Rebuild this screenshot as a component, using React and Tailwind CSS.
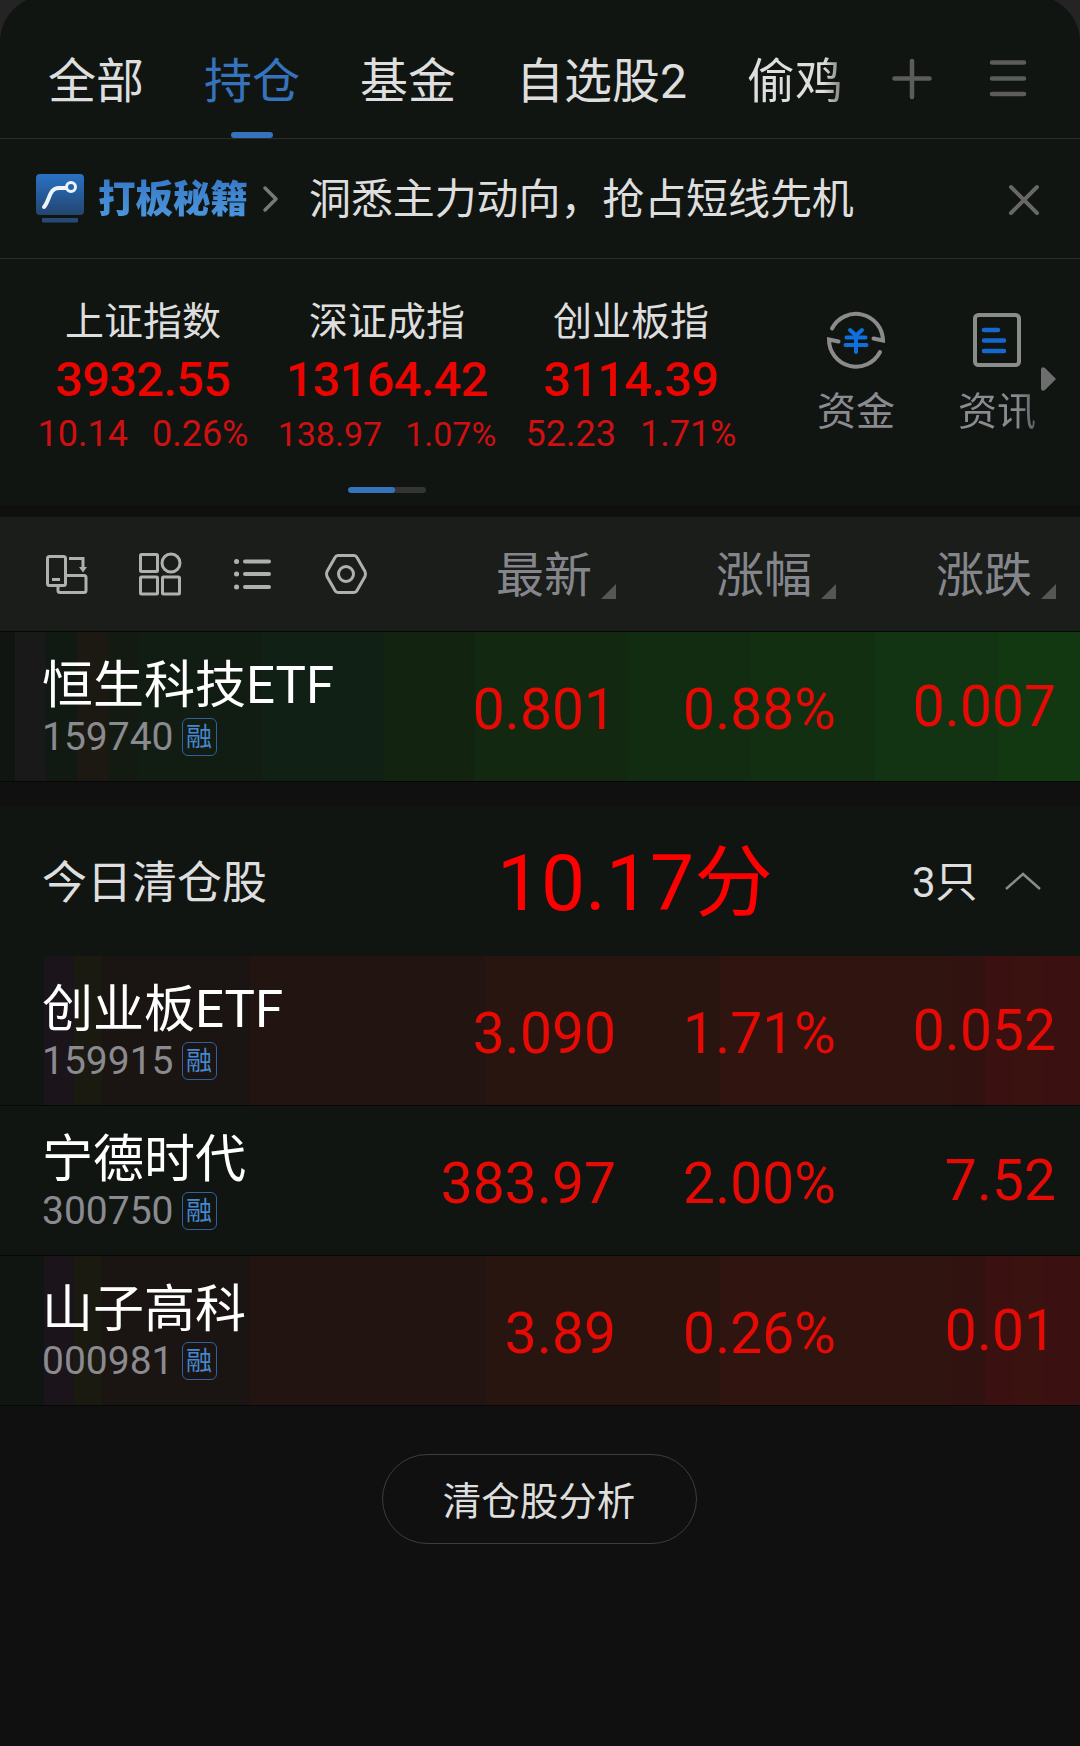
import React from 'react';
import clsx from 'clsx';

const tabs = ['全部', '持仓', '基金', '自选股2'];

const indices = [
  { name: '上证指数', value: '3932.55', change: '10.14', percent: '0.26%', small: false },
  { name: '深证成指', value: '13164.42', change: '138.97', percent: '1.07%', small: true },
  { name: '创业板指', value: '3114.39', change: '52.23', percent: '1.71%', small: false },
];

const columns = ['最新', '涨幅', '涨跌'];

const holding = { name: '恒生科技ETF', code: '159740', price: '0.801', percent: '0.88%', change: '0.007', tone: 'green' };

const clearedStocks = [
  { name: '创业板ETF', code: '159915', price: '3.090', percent: '1.71%', change: '0.052', tone: 'red' },
  { name: '宁德时代', code: '300750', price: '383.97', percent: '2.00%', change: '7.52', tone: 'plain' },
  { name: '山子高科', code: '000981', price: '3.89', percent: '0.26%', change: '0.01', tone: 'red' },
];

// Stepped colour bands behind a row
const bands = {
  green: [
    ['w-[15px]', 'bg-[#111512]'],
    ['w-[31px]', 'bg-[#1a191a]'],
    ['w-[31px]', 'bg-[#111a12]'],
    ['w-[31px]', 'bg-[#1b1911]'],
    ['w-[30px]', 'bg-[#121a11]'],
    ['w-[123px]', 'bg-[#111c12]'],
    ['w-[123px]', 'bg-[#112014]'],
    ['w-[91px]', 'bg-[#122310]'],
    ['w-[153px]', 'bg-[#122811]'],
    ['w-[123px]', 'bg-[#122c12]'],
    ['w-[124px]', 'bg-[#132f12]'],
    ['w-[123px]', 'bg-[#123412]'],
    ['flex-1', 'bg-[#123812]'],
  ],
  red: [
    ['w-[44px]', 'bg-[#111512]'],
    ['w-[30px]', 'bg-[#1b141a]'],
    ['w-[28px]', 'bg-[#1a1a11]'],
    ['w-[148px]', 'bg-[#1a1512]'],
    ['w-[235px]', 'bg-[#221411]'],
    ['w-[235px]', 'bg-[#291510]'],
    ['w-[232px]', 'bg-[#301410]'],
    ['w-[33px]', 'bg-[#301211]'],
    ['w-[29px]', 'bg-[#3a1011]'],
    ['w-[28px]', 'bg-[#3a1311]'],
    ['flex-1', 'bg-[#3a1011]'],
  ],
  plain: [],
};

const SortMark = () => (
  <svg className="w-[15px] h-[15px] mb-[3px]" viewBox="0 0 15 15">
    <path d="M15 0v15H0z" fill="#555755" />
  </svg>
);

const StockRow = ({ stock }) => (
  <div className="relative h-[150px] border-b border-[#060806] bg-[#111512]">
    <div className="absolute inset-0 flex">
      {bands[stock.tone].map(([width, color], i) => (
        <span key={i} className={clsx('h-full', width, color)} />
      ))}
    </div>
    <div className="relative flex h-full pr-6">
      <div className="w-[376px] pl-[42px] pt-6">
        <div className="h-[60px] text-[51px] leading-[60px] text-white whitespace-nowrap">{stock.name}</div>
        <div className="mt-px flex items-center gap-2">
          <span className="text-[39px] leading-[40px] text-[#8a8a90]">{stock.code}</span>
          <span className="flex h-[38px] w-[35px] items-center justify-center rounded-[6px] border border-[#33609c] text-[26px] leading-none text-[#4687cf]">
            融
          </span>
        </div>
      </div>
      <div className="flex flex-1 text-right text-[57px] leading-[64px] text-[#e60a05]">
        <span className="w-60 pt-[46px]">{stock.price}</span>
        <span className="w-[220px] pt-[46px]">{stock.percent}</span>
        <span className="w-[220px] pt-[43px]">{stock.change}</span>
      </div>
    </div>
  </div>
);

const App = () => {
  return (
    <div className="w-[1080px] h-[1746px] overflow-hidden bg-[#242424] font-[Roboto,'Noto_Sans_CJK_SC',sans-serif]">
      <div className="-mt-[5px] h-[1751px] overflow-hidden rounded-t-[48px] bg-[#101010] pt-[5px]">
        {/* Tabs */}
        <div className="flex h-[139px] border-b border-[#2a2d2a] bg-[#111512] pl-12">
          <div className="flex gap-[60px] text-[48px] leading-[64px] text-[#dedede] whitespace-nowrap">
            {tabs.map((tab) => (
              <div
                key={tab}
                className={clsx('flex h-[138px] flex-col items-center justify-between pt-[50px]', tab === '持仓' && 'text-[#3673bd]')}
              >
                <span>{tab}</span>
                {tab === '持仓' && <span className="h-[6px] w-[42px] rounded-[3px] bg-[#3673bd]" />}
              </div>
            ))}
            <div className="pt-[50px]">
              <span className="bg-linear-to-r from-[#dedede] from-80% to-[#777] bg-clip-text text-transparent">偷鸡</span>
            </div>
          </div>
          <svg className="ml-[49px] mt-[58px] h-[42px] w-[40px]" viewBox="0 0 40 42" fill="none" stroke="#5b5c5b" strokeWidth="4.5" strokeLinecap="round">
            <path d="M20 3v36M2.500 20.500h35" />
          </svg>
          <svg className="ml-[56px] mt-[58px] h-[42px] w-[40px]" viewBox="0 0 40 42" fill="none" stroke="#5b5c5b" strokeWidth="4.5" strokeLinecap="round">
            <path d="M4 4.500h32M4 20.500h32M4 36h32" />
          </svg>
        </div>

        {/* Promo strip */}
        <div className="flex h-[120px] items-center border-b border-[#2a2d2a] bg-[#111512] pl-9">
          <svg className="h-[50px] w-12" viewBox="0 0 48 50" fill="none">
            <defs>
              <linearGradient id="promo" x1="0" y1="0" x2="0" y2="1">
                <stop offset="0" stopColor="#2a72c4" />
                <stop offset="1" stopColor="#23456f" />
              </linearGradient>
            </defs>
            <rect width="48" height="41" rx="4" fill="url(#promo)" />
            <rect x="6" y="44" width="36" height="4.5" rx="1" fill="#264a75" />
            <path d="M8 33c6-7 5-19 15-19h7" stroke="#eef4fc" strokeWidth="4" strokeLinecap="round" />
            <circle cx="35" cy="13" r="4.5" stroke="#eef4fc" strokeWidth="3" />
          </svg>
          <span className="ml-[14px] bg-linear-to-b from-[#3577c6] to-[#4f9ade] bg-clip-text text-[37.5px] font-black leading-[48px] text-transparent">
            打板秘籍
          </span>
          <svg className="ml-[14px] h-[30px] w-[18px]" viewBox="0 0 18 30" fill="none" stroke="#777877" strokeWidth="3.5" strokeLinecap="round" strokeLinejoin="round">
            <path d="M3 4l11 11L3 26" />
          </svg>
          <span className="ml-[29px] pt-[3px] text-[42px] leading-[60px] -tracking-[0.1px] text-[#dedede] whitespace-nowrap">
            洞悉主力动向，抢占短线先机
          </span>
          <svg className="ml-auto mr-10 mt-[2px] h-8 w-8" viewBox="0 0 32 32" fill="none" stroke="#666766" strokeWidth="4" strokeLinecap="round">
            <path d="M3 3l26 26M29 3L3 29" />
          </svg>
        </div>

        {/* Market indices */}
        <div className="relative h-[246px] bg-[#111512]">
          <div className="flex pl-[21px] pt-[33px]">
            {indices.map((item) => (
              <div key={item.name} className="flex w-[244px] flex-col items-center pt-[2px] whitespace-nowrap">
                <span className="text-[39px] leading-[56px] text-[#dedede]">{item.name}</span>
                <span className="text-[49px] font-medium leading-[60px] -tracking-[0.8px] text-[#ea0500]">{item.value}</span>
                <span
                  className={clsx(
                    'flex h-[48px] items-center text-[#cf1010]',
                    item.small ? 'gap-[23px] pt-px text-[34px]' : 'gap-6 text-[36px]'
                  )}
                >
                  <span>{item.change}</span>
                  <span>{item.percent}</span>
                </span>
              </div>
            ))}
            <div className="ml-[32px] flex w-[142px] flex-col items-center pt-[15px]">
              <svg className="h-[64px] w-[64px]" viewBox="0 0 64 64" fill="none" strokeLinecap="round">
                <g stroke="#8b8b8b" strokeWidth="4">
                  <path d="M8 21.500A27 27 0 0 1 59 33.500L49.500 31.500" />
                  <path d="M56 45A27 27 0 0 1 5 32.500L14.500 34.500" />
                </g>
                <path d="M26 23l6 5.500 6-5.500M22.500 30.500h19M21.500 38h21M32 29v16" stroke="#0f6fdc" strokeWidth="4" />
              </svg>
              <span className="mt-[13px] text-[39px] leading-[56px] text-[#8a8a90]">资金</span>
            </div>
            <div className="flex w-[140px] flex-col items-center pt-[15px]">
              <svg className="h-[64px] w-[64px]" viewBox="0 0 64 64" fill="none" strokeLinecap="round">
                <rect x="10" y="8" width="44" height="50" rx="3.500" stroke="#8b8b8b" strokeWidth="4" />
                <path d="M19 23h14M19 33.500h20M19 44h20" stroke="#1668cf" strokeWidth="4.500" />
              </svg>
              <span className="mt-[13px] bg-linear-to-r from-[#8a8a90] from-75% to-[#5e5f62] bg-clip-text text-[39px] leading-[56px] text-transparent">
                资讯
              </span>
            </div>
          </div>
          <svg className="absolute right-6 top-[107px] h-[26px] w-[15px]" viewBox="0 0 15 26">
            <path d="M0 3Q1 0 4 2L15 13 4 24Q1 26 0 23z" fill="#6c6d6c" />
          </svg>
          <div className="absolute left-[348px] top-[228px] h-[6px] w-[78px] overflow-hidden rounded-[3px] bg-[#333433]">
            <div className="h-full w-[47px] rounded-[3px] bg-[#3673bd]" />
          </div>
        </div>

        {/* List toolbar */}
        <div className="mt-3 flex h-[115px] border-b border-[#060806] bg-[#1a1d1a] pl-[45px] pt-[35px]">
          <svg className="h-[44px] w-[44px]" viewBox="0 0 44 44" fill="none" stroke="#b0b0b0" strokeWidth="3">
            <rect x="2.500" y="4.500" width="18" height="29" rx="2" />
            <path d="M7 27.500h8M24 6.500h14v9" />
            <path d="M34 15h8l-4 5.500z" fill="#b0b0b0" stroke="none" />
            <path d="M21 23.500h18a2 2 0 0 1 2 2v13a2 2 0 0 1-2 2H15a2 2 0 0 1-2-2v-5" />
          </svg>
          <svg className="ml-[49px] h-[44px] w-[44px]" viewBox="0 0 44 44" fill="none" stroke="#b0b0b0" strokeWidth="3">
            <rect x="2.500" y="2.500" width="17" height="17" rx="1" />
            <circle cx="33" cy="11" r="9" />
            <rect x="2.500" y="25" width="17" height="17" rx="1" />
            <rect x="24.500" y="25" width="17" height="17" rx="1" />
          </svg>
          <svg className="ml-[49px] h-[44px] w-[44px]" viewBox="0 0 44 44" fill="none" stroke="#b0b0b0" strokeWidth="4" strokeLinecap="round">
            <path d="M14 9.500h24M14 22h24M14 35h24" />
            <path d="M5.500 9.500h.1M5.500 22h.1M5.500 35h.1" strokeWidth="5" />
          </svg>
          <svg className="ml-[49px] h-[44px] w-[44px]" viewBox="0 0 44 44" fill="none" stroke="#b0b0b0" strokeWidth="3" strokeLinejoin="round">
            <path d="M14 3.500h16q2 0 3 2l8 14q1 2.500 0 5l-8 14q-1 2-3 2H14q-2 0-3-2l-8-14q-1-2.500 0-5l8-14q1-2 3-2z" />
            <circle cx="22" cy="22" r="7.500" />
          </svg>
          <div className="ml-auto mr-6 flex">
            {columns.map((label) => (
              <div key={label} className="flex h-[50px] w-[220px] items-end justify-end gap-[9px]">
                <span className="-mb-[2px] text-[48px] leading-[56px] text-[#85868c]">{label}</span>
                <SortMark />
              </div>
            ))}
          </div>
        </div>

        <StockRow stock={holding} />

        {/* Cleared today */}
        <div className="mt-6 flex h-[150px] items-center bg-[#111512] pl-[42px]">
          <span className="w-[455px] pt-[6px] text-[45px] text-[#dedede]">今日清仓股</span>
          <span className="w-[415px] pt-[3px] text-[78.5px] leading-[90px] text-[#ff0000]">10.17分</span>
          <span className="pt-[3px] text-[42px] text-[#dedede]">3只</span>
          <svg className="ml-[25px] h-[20px] w-[40px]" viewBox="0 0 40 20" fill="none" stroke="#8b8b8b" strokeWidth="2.5">
            <path d="M3 18L20 3l17 15" />
          </svg>
        </div>
        {clearedStocks.map((stock) => (
          <StockRow key={stock.code} stock={stock} />
        ))}

        <div className="mt-12 flex justify-center pr-[2px]">
          <button className="h-[90px] w-[315px] rounded-full border border-[#3d3d3d] pt-[5px] text-[38.5px] text-[#dedede]">清仓股分析</button>
        </div>
      </div>
    </div>
  );
};

export default App;
